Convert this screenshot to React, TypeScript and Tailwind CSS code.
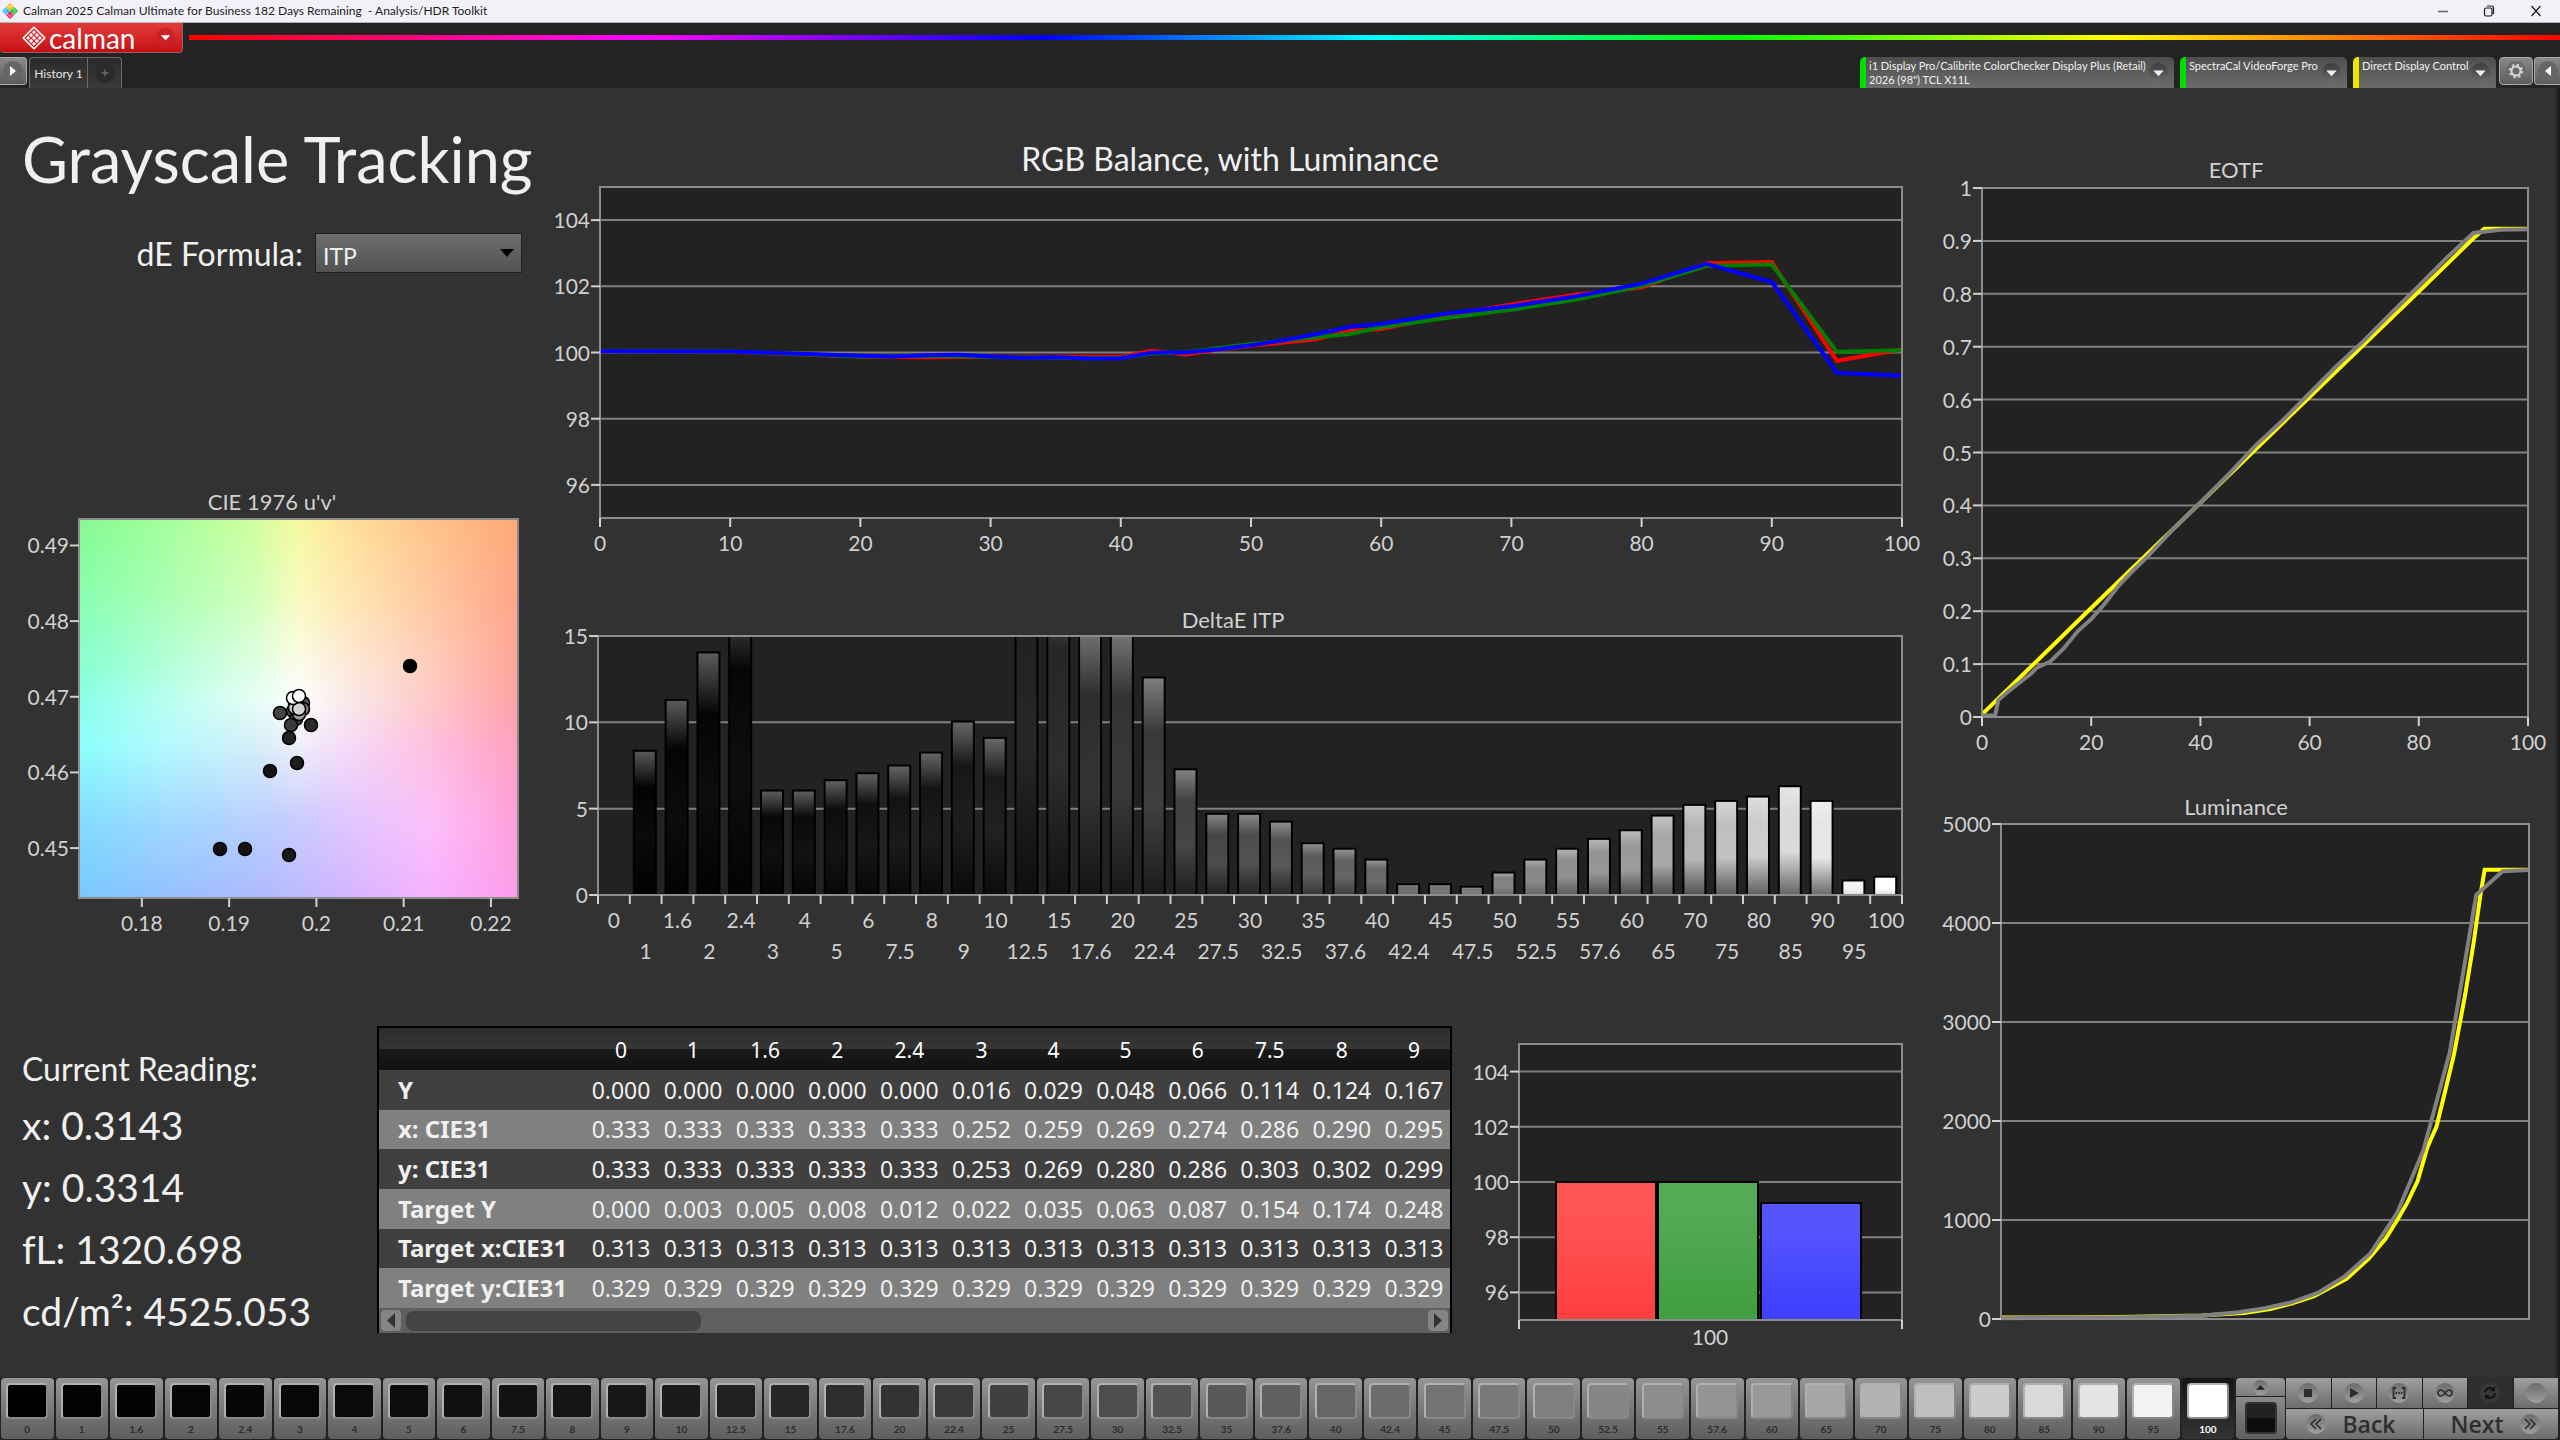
import type { ReactNode } from "react";
import clsx from "clsx";

type Point = [number, number];

type Plot = {
  left: number;
  right: number;
  top: number;
  bottom: number;
  xMin: number;
  xMax: number;
  yMin: number;
  yMax: number;
};

const LEVELS = [
  0, 1, 1.6, 2, 2.4, 3, 4, 5, 6, 7.5, 8, 9, 10, 12.5, 15, 17.6, 20, 22.4, 25, 27.5, 30, 32.5, 35,
  37.6, 40, 42.4, 45, 47.5, 50, 52.5, 55, 57.6, 60, 65, 70, 75, 80, 85, 90, 95, 100,
];

const DELTA_E = [
  0, 8.35, 11.3, 14.05, 17.5, 6.05, 6.05, 6.65, 7.05, 7.5, 8.25, 10.05, 9.1, 22, 19, 15.4, 15.4,
  12.6, 7.28, 4.7, 4.7, 4.25, 3, 2.68, 2.05, 0.62, 0.62, 0.48, 1.3, 2.05, 2.68, 3.25, 3.75, 4.6,
  5.22, 5.45, 5.7, 6.3, 5.45, 0.84, 1.06,
];

const RED: Point[] = [
  [0, 100.04], [10, 100.02], [20, 99.88], [25, 99.86], [30, 99.87], [37.6, 99.87], [40, 99.87],
  [42.4, 100.05], [45, 99.94], [47.5, 100.09], [50, 100.2], [55, 100.4], [57.6, 100.65],
  [60, 100.71], [65, 101.12], [70, 101.45], [75, 101.75], [80, 101.96], [85, 102.7],
  [90, 102.73], [95, 99.75], [100, 100.09],
];

const GREEN: Point[] = [
  [0, 100.04], [10, 100.03], [20, 99.88], [25, 99.9], [30, 99.87], [37.6, 99.83], [40, 99.84],
  [42.4, 99.97], [45, 100.01], [50, 100.26], [55, 100.46], [57.6, 100.56], [60, 100.76],
  [65, 101.04], [70, 101.29], [75, 101.6], [80, 102.01], [85, 102.62], [90, 102.66],
  [95, 100.02], [100, 100.07],
];

const BLUE: Point[] = [
  [0, 100.04], [10, 100.03], [20, 99.9], [22.4, 99.88], [25, 99.92], [27.5, 99.93], [30, 99.88],
  [32.5, 99.84], [35, 99.86], [37.6, 99.82], [40, 99.83], [42.4, 100], [45, 100], [47.5, 100.1],
  [50, 100.22], [52.5, 100.37], [55, 100.55], [57.6, 100.78], [60, 100.86], [65, 101.18],
  [70, 101.4], [75, 101.7], [80, 102.08], [85, 102.68], [90, 102.13], [95, 99.39], [100, 99.3],
];

const EOTF_TARGET: Point[] = [
  [0, 0.005], [20, 0.206], [40, 0.405], [60, 0.605], [80, 0.804], [90, 0.905], [92, 0.923],
  [100, 0.923],
];

const EOTF_MEASURED: Point[] = [
  [0, 0.003], [2.4, 0.003], [3, 0.032], [5, 0.05], [7.5, 0.07], [9, 0.082], [10, 0.093],
  [12.5, 0.105], [15, 0.13], [17.6, 0.163], [20, 0.185], [22.4, 0.213], [25, 0.248],
  [27.5, 0.275], [30, 0.3], [35, 0.355], [40, 0.405], [45, 0.457], [50, 0.512], [55, 0.56],
  [60, 0.612], [65, 0.664], [70, 0.712], [75, 0.764], [80, 0.815], [85, 0.867], [90, 0.915],
  [95, 0.921], [100, 0.922],
];

const LUM_TARGET: Point[] = [
  [0, 14], [20, 18], [38, 35], [46, 60], [51, 100], [55, 155], [59.3, 230], [65.5, 407],
  [69.7, 613], [72.8, 807], [75.2, 1012], [77, 1180], [78.9, 1394], [80.8, 1741], [82.5, 1947],
  [84.3, 2340], [85.8, 2675], [87.9, 3273], [89.5, 3797], [90.8, 4282], [91.6, 4537], [100, 4537],
];

const LUM_MEASURED: Point[] = [
  [0, 8], [20, 12], [38, 32], [45, 68], [50, 108], [55, 168], [60, 264], [65, 426], [70, 665],
  [75, 1069], [80, 1704], [85, 2694], [90, 4282], [95, 4522], [100, 4535],
];

// Colours of the u'v' plane, one row per height, at the columns in MESH_X
const MESH_X = [0, 0.2, 0.4, 0.5, 0.6, 0.8, 1];
const MESH: { y: number; colors: string[] }[] = [
  { y: 0, colors: ["86f98f", "a5ff9c", "d0ff9e", "f6f9a0", "ffe29a", "ffc38a", "ffa775"] },
  { y: 0.2, colors: ["88ffb0", "abffb4", "d2ffba", "f8fbbe", "ffe9b4", "ffc8a0", "ffa588"] },
  { y: 0.4, colors: ["88ffd4", "b4ffdc", "e0ffe6", "fbfcee", "fdebdc", "ffcdbf", "ffa59a"] },
  { y: 0.48, colors: ["8affea", "b8fff0", "e6fdf6", "ffffff", "f8ecec", "ffc8c8", "ffa2a6"] },
  { y: 0.6, colors: ["8afffb", "b4f9ff", "d4eef8", "eeeef8", "f6dcfa", "ffc0e0", "ffa0c0"] },
  { y: 0.8, colors: ["82dcff", "a0d8ff", "b8d0ff", "c8cbff", "dec6ff", "fcc0fb", "ff9edb"] },
  { y: 1, colors: ["78c8ff", "94c0ff", "acbaff", "bebaff", "d2b6ff", "f6b2ff", "ff9cea"] },
];

const CIE_POINTS: [number, number, string][] = [
  [303, 223, "#555"], [295, 225, "#666"], [293, 231, "#4c4c4c"], [303, 229, "#777"],
  [296, 239, "#444"], [299, 234, "#999"], [295, 228, "#ccc"], [299, 229, "#d4d4d4"],
  [410, 186, "#000"], [280, 233, "#444"], [311, 245, "#2a2a2a"], [291, 245, "#3a3a3a"],
  [289, 258, "#222"], [297, 283, "#1c1c1c"], [270, 291, "#141414"], [220, 369, "#101010"],
  [245, 369, "#131313"], [289, 375, "#181818"], [293, 218, "#fff"], [299, 216, "#fff"],
];

const TABLE_HEAD = ["0", "1", "1.6", "2", "2.4", "3", "4", "5", "6", "7.5", "8", "9"];
const TABLE_ROWS: { name: string; cells: string[] }[] = [
  {
    name: "Y",
    cells: ["0.000", "0.000", "0.000", "0.000", "0.000", "0.016", "0.029", "0.048", "0.066", "0.114", "0.124", "0.167"],
  },
  {
    name: "x: CIE31",
    cells: ["0.333", "0.333", "0.333", "0.333", "0.333", "0.252", "0.259", "0.269", "0.274", "0.286", "0.290", "0.295"],
  },
  {
    name: "y: CIE31",
    cells: ["0.333", "0.333", "0.333", "0.333", "0.333", "0.253", "0.269", "0.280", "0.286", "0.303", "0.302", "0.299"],
  },
  {
    name: "Target Y",
    cells: ["0.000", "0.003", "0.005", "0.008", "0.012", "0.022", "0.035", "0.063", "0.087", "0.154", "0.174", "0.248"],
  },
  { name: "Target x:CIE31", cells: Array(12).fill("0.313") },
  { name: "Target y:CIE31", cells: Array(12).fill("0.329") },
];

const range = (from: number, to: number, step: number) =>
  Array.from({ length: Math.round((to - from) / step) + 1 }, (_, i) => +(from + i * step).toFixed(2));

const sx = (p: Plot, v: number) => p.left + ((v - p.xMin) / (p.xMax - p.xMin)) * (p.right - p.left);
const sy = (p: Plot, v: number) => p.bottom - ((v - p.yMin) / (p.yMax - p.yMin)) * (p.bottom - p.top);

const gray = (v: number) => {
  const n = Math.max(0, Math.min(255, Math.round(v)));
  return `rgb(${n},${n},${n})`;
};

function mixRow(t: number) {
  const i = Math.max(1, MESH.findIndex((r) => r.y >= t));
  const a = MESH[i - 1];
  const b = MESH[i];
  const k = (t - a.y) / (b.y - a.y);
  return a.colors.map((c, n) => {
    const channel = (o: number) => {
      const from = parseInt(c.slice(o, o + 2), 16);
      const to = parseInt(b.colors[n].slice(o, o + 2), 16);
      return Math.round(from + (to - from) * k);
    };
    return `rgb(${channel(0)},${channel(2)},${channel(4)})`;
  });
}

/* ---------- chart parts ---------- */

function ChartTitle({ x, y, large, children }: { x: number; y: number; large?: boolean; children: string }) {
  return (
    <text x={x} y={y} textAnchor="middle" className={large ? "fill-[#f0f0f0] text-[32px]" : "fill-[#d0d0d0] text-[22px]"}>
      {children}
    </text>
  );
}

function YAxis({ plot, ticks }: { plot: Plot; ticks: number[] }) {
  return (
    <g>
      {ticks.map((t) => (
        <g key={t}>
          <line x1={plot.left - 9} x2={plot.left} y1={sy(plot, t)} y2={sy(plot, t)} stroke="#d0d0d0" strokeWidth="2" />
          <text x={plot.left - 10} y={sy(plot, t) + 8} textAnchor="end" className="fill-[#d0d0d0] text-[21px]">
            {t}
          </text>
        </g>
      ))}
    </g>
  );
}

function XAxis({ plot, ticks }: { plot: Plot; ticks: number[] }) {
  return (
    <g>
      {ticks.map((t) => (
        <g key={t}>
          <line x1={sx(plot, t)} x2={sx(plot, t)} y1={plot.bottom} y2={plot.bottom + 9} stroke="#d0d0d0" strokeWidth="2" />
          <text x={sx(plot, t)} y={plot.bottom + 33} textAnchor="middle" className="fill-[#d0d0d0] text-[21px]">
            {t}
          </text>
        </g>
      ))}
    </g>
  );
}

function PlotArea({ plot, grid, children }: { plot: Plot; grid: number[]; children?: ReactNode }) {
  const width = plot.right - plot.left;
  const height = plot.bottom - plot.top;
  return (
    <g>
      <rect x={plot.left} y={plot.top} width={width} height={height} fill="#222" />
      {grid.map((t) => (
        <line key={t} x1={plot.left} x2={plot.right} y1={sy(plot, t)} y2={sy(plot, t)} stroke="#808080" strokeWidth="2" />
      ))}
      {children}
      <rect x={plot.left} y={plot.top} width={width} height={height} fill="none" stroke="#8c8c8c" strokeWidth="2" />
    </g>
  );
}

function Series({ plot, data, color }: { plot: Plot; data: Point[]; color: string }) {
  return (
    <polyline
      points={data.map(([x, y]) => `${sx(plot, x)},${sy(plot, y)}`).join(" ")}
      fill="none"
      stroke={color}
      strokeWidth="4"
    />
  );
}

/* ---------- charts ---------- */

function RgbBalanceChart() {
  const plot: Plot = { left: 60, right: 1362, top: 57, bottom: 388, xMin: 0, xMax: 100, yMin: 95, yMax: 105 };
  const ticks = range(96, 104, 2);
  return (
    <svg viewBox="0 0 1380 440" className="block w-full" role="img" aria-label="RGB Balance">
      <ChartTitle x={690} y={41} large>RGB Balance, with Luminance</ChartTitle>
      <PlotArea plot={plot} grid={ticks}>
        <Series plot={plot} data={RED} color="#f00" />
        <Series plot={plot} data={GREEN} color="#008000" />
        <Series plot={plot} data={BLUE} color="#00f" />
      </PlotArea>
      <YAxis plot={plot} ticks={ticks} />
      <XAxis plot={plot} ticks={range(0, 100, 10)} />
    </svg>
  );
}

function DeltaEChart() {
  const plot: Plot = { left: 58, right: 1362, top: 36, bottom: 295, xMin: 0, xMax: 41, yMin: 0, yMax: 15 };
  return (
    <svg viewBox="0 0 1380 380" className="block w-full" role="img" aria-label="DeltaE ITP">
      <defs>
        <clipPath id="delta-clip">
          <rect x={plot.left} y={plot.top} width={plot.right - plot.left} height={plot.bottom - plot.top} />
        </clipPath>
        {LEVELS.map((level, i) => {
          const base = level * 2.55;
          const shade = 1 - Math.min(0.55, DELTA_E[i] * 0.14);
          return (
            <linearGradient key={level} id={`bar-${i}`} x1="0" x2="0" y1="0" y2="1">
              <stop offset="0" stopColor={gray(base + (255 - base) * 0.35)} />
              <stop offset="0.25" stopColor={gray(base)} />
              <stop offset="0.6" stopColor={gray(base * 0.97 + 8)} />
              <stop offset="1" stopColor={gray(base * shade)} />
            </linearGradient>
          );
        })}
      </defs>
      <ChartTitle x={693} y={28}>DeltaE ITP</ChartTitle>
      <PlotArea plot={plot} grid={[5, 10]}>
        <g clipPath="url(#delta-clip)">
          {DELTA_E.map((v, i) =>
            v > 0 ? (
              <rect
                key={i}
                x={sx(plot, i) + 4}
                y={sy(plot, v)}
                width={22}
                height={plot.bottom - sy(plot, v) + 1}
                fill={`url(#bar-${i})`}
                stroke="#000"
                strokeWidth="2"
              />
            ) : null
          )}
        </g>
      </PlotArea>
      <YAxis plot={plot} ticks={[0, 5, 10, 15]} />
      {range(0, 41, 1).map((i) => (
        <line key={i} x1={sx(plot, i)} x2={sx(plot, i)} y1={plot.bottom} y2={plot.bottom + 9} stroke="#d0d0d0" strokeWidth="2" />
      ))}
      {LEVELS.map((level, i) => (
        <text
          key={level}
          x={sx(plot, i + 0.5)}
          y={i % 2 ? plot.bottom + 64 : plot.bottom + 33}
          textAnchor="middle"
          className="fill-[#d0d0d0] text-[21px]"
        >
          {level}
        </text>
      ))}
    </svg>
  );
}

function CieChart() {
  const plot: Plot = { left: 79, right: 518, top: 39, bottom: 418, xMin: 0.1728, xMax: 0.2231, yMin: 0.4434, yMax: 0.4935 };
  const width = plot.right - plot.left;
  const strips = range(0, 94, 1);
  const stripHeight = (plot.bottom - plot.top) / strips.length;
  return (
    <svg viewBox="0 0 540 480" className="block w-full" role="img" aria-label="CIE 1976 u'v'">
      <defs>
        {strips.map((i) => (
          <linearGradient key={i} id={`uv-${i}`} x1="0" x2="1" y1="0" y2="0">
            {mixRow((i + 0.5) / strips.length).map((c, n) => (
              <stop key={n} offset={MESH_X[n]} stopColor={c} />
            ))}
          </linearGradient>
        ))}
      </defs>
      <ChartTitle x={272} y={30}>CIE 1976 u'v'</ChartTitle>
      {strips.map((i) => (
        <rect key={i} x={plot.left} y={plot.top + i * stripHeight} width={width} height={stripHeight + 1} fill={`url(#uv-${i})`} />
      ))}
      <rect x={plot.left} y={plot.top} width={width} height={plot.bottom - plot.top} fill="none" stroke="#8c8c8c" strokeWidth="2" />
      {CIE_POINTS.map(([x, y, fill], i) => (
        <circle key={i} cx={x} cy={y} r="6.5" fill={fill} stroke="#000" strokeWidth="1.5" />
      ))}
      <YAxis plot={plot} ticks={range(0.45, 0.49, 0.01)} />
      <XAxis plot={plot} ticks={range(0.18, 0.22, 0.01)} />
    </svg>
  );
}

function EotfChart() {
  const plot: Plot = { left: 62, right: 608, top: 38, bottom: 567, xMin: 0, xMax: 100, yMin: 0, yMax: 1 };
  return (
    <svg viewBox="0 0 640 620" className="block w-full" role="img" aria-label="EOTF">
      <ChartTitle x={316} y={28}>EOTF</ChartTitle>
      <PlotArea plot={plot} grid={range(0.1, 1, 0.1)}>
        <Series plot={plot} data={EOTF_TARGET} color="#ff0" />
        <Series plot={plot} data={EOTF_MEASURED} color="#808080" />
      </PlotArea>
      <YAxis plot={plot} ticks={range(0, 1, 0.1)} />
      <XAxis plot={plot} ticks={range(0, 100, 20)} />
    </svg>
  );
}

function LuminanceChart() {
  const plot: Plot = { left: 81, right: 609, top: 44, bottom: 539, xMin: 0, xMax: 100, yMin: 0, yMax: 5000 };
  return (
    <svg viewBox="0 0 640 580" className="block w-full" role="img" aria-label="Luminance">
      <ChartTitle x={316} y={35}>Luminance</ChartTitle>
      <PlotArea plot={plot} grid={range(1000, 4000, 1000)}>
        <Series plot={plot} data={LUM_TARGET} color="#ff0" />
        <Series plot={plot} data={LUM_MEASURED} color="#808080" />
      </PlotArea>
      <YAxis plot={plot} ticks={range(0, 5000, 1000)} />
    </svg>
  );
}

function RgbLevelsChart() {
  const plot: Plot = { left: 67, right: 450, top: 34, bottom: 310, xMin: 0, xMax: 1, yMin: 95, yMax: 105 };
  const ticks = range(96, 104, 2);
  const bars = [
    { id: "red", value: 100, x: 104, from: "#ff5555", to: "#ff4040" },
    { id: "green", value: 100, x: 206, from: "#55aa55", to: "#409f40" },
    { id: "blue", value: 99.24, x: 309, from: "#5555ff", to: "#4040ff" },
  ];
  return (
    <svg viewBox="0 0 468 350" className="block w-full" role="img" aria-label="RGB levels">
      <defs>
        {bars.map((b) => (
          <linearGradient key={b.id} id={`level-${b.id}`} x1="0" x2="0" y1="0" y2="1">
            <stop offset="0.2" stopColor={b.from} />
            <stop offset="0.9" stopColor={b.to} />
          </linearGradient>
        ))}
      </defs>
      <PlotArea plot={plot} grid={ticks}>
        {bars.map((b) => (
          <rect
            key={b.id}
            x={b.x}
            y={sy(plot, b.value)}
            width={100}
            height={plot.bottom - sy(plot, b.value)}
            fill={`url(#level-${b.id})`}
            stroke="#000"
            strokeWidth="2"
          />
        ))}
      </PlotArea>
      <YAxis plot={plot} ticks={ticks} />
      {[plot.left, plot.right].map((x) => (
        <line key={x} x1={x} x2={x} y1={plot.bottom} y2={plot.bottom + 9} stroke="#d0d0d0" strokeWidth="2" />
      ))}
      <text x={258} y={335} textAnchor="middle" className="fill-[#d0d0d0] text-[21px]">100</text>
    </svg>
  );
}

/* ---------- window chrome ---------- */

function Knob({ className, children }: { className?: string; children?: ReactNode }) {
  return (
    <span className={clsx("flex shrink-0 items-center justify-center rounded-full", className)}>
      <svg viewBox="0 0 20 20" className="h-full w-full" fill="currentColor" aria-hidden="true">
        {children}
      </svg>
    </span>
  );
}

function TitleBar() {
  return (
    <div className="flex h-[23px] items-center border-b border-[#b4b2b8] bg-[#f3f1f8] text-[12px] text-[#1c1c1c]">
      <svg viewBox="0 0 16 16" className="ml-[2px] h-4 w-4" aria-hidden="true">
        <path d="M8 0l4 4-4 4-4-4z" fill="#fcc419" />
        <path d="M12 4l4 4-4 4-4-4z" fill="#2fc52f" />
        <path d="M8 8l4 4-4 4-4-4z" fill="#f0245c" />
        <path d="M4 4l4 4-4 4-4-4z" fill="#2fc4f0" />
        <path d="M8 2.5L13.5 8 8 13.5 2.5 8z" fill="none" stroke="#f3f1f8" strokeWidth="0.7" />
      </svg>
      <h1 className="ml-[5px] grow whitespace-pre">
        Calman 2025 Calman Ultimate for Business 182 Days Remaining  - Analysis/HDR Toolkit
      </h1>
      <button aria-label="Minimize" className="flex h-full w-[46px] items-center justify-center">
        <svg viewBox="0 0 12 12" className="h-3 w-3"><path d="M1 6.5h10" stroke="#666" strokeWidth="1.5" /></svg>
      </button>
      <button aria-label="Restore" className="flex h-full w-[46px] items-center justify-center">
        <svg viewBox="0 0 12 12" className="h-3 w-3" fill="none" stroke="#1c1c1c" strokeWidth="1.2">
          <rect x="1.5" y="3" width="7.5" height="8" rx="1.5" />
          <path d="M4 1h4.5a2 2 0 0 1 2 2v6" />
        </svg>
      </button>
      <button aria-label="Close" className="flex h-full w-[48px] items-center justify-center">
        <svg viewBox="0 0 12 12" className="h-3 w-3"><path d="M1.5 1l9 10M10.5 1l-9 10" stroke="#1c1c1c" strokeWidth="1.2" /></svg>
      </button>
    </div>
  );
}

function BrandBar() {
  return (
    <div className="flex h-[34px] items-start">
      <button className="flex h-[30px] w-[183px] shrink-0 items-center rounded-b-[4px] border-r border-b border-[#8a6a6a] bg-linear-to-b from-[#e23a3a] to-[#c80a10] pl-[22px] text-white">
        <svg viewBox="0 0 24 24" className="h-6 w-6" aria-hidden="true">
          <path d="M12 1.5L22.5 12 12 22.5 1.5 12z" fill="#fff" stroke="#fff" strokeWidth="2" strokeLinejoin="round" />
          <path
            d="M12 3.2L20.8 12 12 20.8 3.2 12zM9.1 6.1L17.9 14.900M6.1 9.1L14.9 17.9M14.9 6.1L6.1 14.9M17.9 9.1L9.1 17.9"
            fill="none"
            stroke="#d8282c"
            strokeWidth="1.3"
          />
        </svg>
        <span className="ml-[3px] text-[28px] leading-[26px]">calman</span>
        <Knob className="ml-auto mr-[7px] h-[19px] w-[19px] bg-[#c92026]">
          <path d="M5 7.5h10L10 13z" />
        </Knob>
      </button>
      <div className="ml-[6px] mt-[12px] h-[5px] grow bg-[linear-gradient(to_right,#f00_0%,#f0f_19%,#00f_36%,#0ff_50%,#0f0_65%,#ff0_81%,#f00_100%)]" />
    </div>
  );
}

const DEVICES = [
  {
    lines: ["i1 Display Pro/Calibrite ColorChecker Display Plus (Retail)", "2026 (98\") TCL X11L"],
    status: "border-[#00e000]",
    width: "w-[314px]",
  },
  { lines: ["SpectraCal VideoForge Pro"], status: "border-[#00e000]", width: "w-[167px]" },
  { lines: ["Direct Display Control"], status: "border-[#f0e600]", width: "w-[143px]" },
];

function TabBar() {
  return (
    <div className="flex h-[31px] items-start">
      <button aria-label="Show workflow" className="flex h-[28px] w-[27px] items-center justify-center rounded-r-[4px] border border-l-0 border-[#a8a8a8] bg-linear-to-b from-[#8a8a8a] to-[#5c5c5c] text-white">
        <Knob className="h-[20px] w-[20px] bg-[#666]"><path d="M7 5l6 5-6 5z" /></Knob>
      </button>
      <div className="ml-[2px] flex h-[31px] rounded-t-[4px] border border-b-0 border-[#6a6a6a] bg-linear-to-b from-[#2c2c2c] to-[#3a3a3a]">
        <button className="w-[58px] border-r border-[#6a6a6a] pt-[2px] text-[12px] text-[#e6e6e6]">History 1</button>
        <button aria-label="Add history" className="flex w-[33px] items-center justify-center text-[#6c6c6c]">
          <Knob className="h-[20px] w-[20px] bg-[#2a2a2a]"><path d="M9.3 6.5h1.4v2.8h2.8v1.4h-2.8v2.8H9.3v-2.8H6.5V9.3h2.8z" /></Knob>
        </button>
      </div>
      <div className="ml-auto flex gap-[6px]">
        {DEVICES.map((d) => (
          <button
            key={d.lines[0]}
            className={clsx(
              "flex h-[31px] items-start rounded-t-[5px] border-l-[6px] bg-linear-to-b from-[#4e4e4e] to-[#6c6c6c] pt-[2px] pl-[3px] text-left text-[11px] leading-[14px] text-[#f0f0f0]",
              d.status,
              d.width
            )}
          >
            <span className="whitespace-nowrap">
              {d.lines.map((line) => <span key={line} className="block">{line}</span>)}
            </span>
            <Knob className="mt-[4px] ml-auto mr-[6px] h-[19px] w-[19px] bg-linear-to-b from-[#3c3c3c] to-[#6a6a6a]">
              <path d="M4.5 8h11L10 14z" />
            </Knob>
          </button>
        ))}
      </div>
      <div className="ml-[3px] flex gap-px">
        <button aria-label="Settings" className="flex h-[28px] w-[34px] items-center justify-center rounded-[4px] border border-[#a8a8a8] bg-linear-to-b from-[#8a8a8a] to-[#5c5c5c] text-[#d8d8d8]">
          <Knob className="h-[20px] w-[20px] bg-[#6a6a6a]">
            <circle cx="10" cy="10" r="4.5" fill="none" stroke="currentColor" strokeWidth="2" />
            <circle cx="10" cy="10" r="6.3" fill="none" stroke="currentColor" strokeWidth="1.8" strokeDasharray="2.47 2.47" />
          </Knob>
        </button>
        <button aria-label="Hide panel" className="flex h-[28px] w-[26px] items-center justify-center rounded-l-[4px] border border-r-0 border-[#a8a8a8] bg-linear-to-b from-[#8a8a8a] to-[#5c5c5c] text-white">
          <Knob className="h-[20px] w-[20px] bg-[#666]"><path d="M13 5l-6 5 6 5z" /></Knob>
        </button>
      </div>
    </div>
  );
}

/* ---------- readings ---------- */

function Readings() {
  return (
    <section className="pt-[38px] pl-[22px] text-[39px] leading-[62px] whitespace-nowrap text-[#f0f0f0]">
      <h3 className="mb-1 text-[32px] leading-[42px]">Current Reading:</h3>
      <p>x: 0.3143</p>
      <p>y: 0.3314</p>
      <p>fL: 1320.698</p>
      <p>cd/m²: 4525.053</p>
    </section>
  );
}

function DataTable() {
  return (
    <section className="mt-4 self-start border-x-2 border-t-2 border-black">
      <table className="h-[280px] w-full table-fixed border-collapse font-['Noto_Sans',sans-serif] text-[23px] leading-[30px] text-[#f0f0f0]">
        <thead>
          <tr className="h-[42px] bg-[linear-gradient(to_bottom,#2c2c2c_0%,#363636_50%,#1a1a1a_50%,#121212_100%)]">
            <th className="w-[206px]" aria-label="Measure" />
            {TABLE_HEAD.map((h) => (
              <th key={h} className="p-0 pt-[2px] text-[21px] font-normal text-white">{h}</th>
            ))}
          </tr>
        </thead>
        <tbody>
          {TABLE_ROWS.map((row) => (
            <tr key={row.name} className="bg-[#404040] even:bg-[#808080]">
              <th className="p-0 pl-[19px] text-left text-[24px] font-bold whitespace-nowrap">{row.name}</th>
              {row.cells.map((c, i) => <td key={i} className="p-0 text-center">{c}</td>)}
            </tr>
          ))}
        </tbody>
      </table>
      <div className="flex h-[25px] items-center gap-[5px] bg-[#5f5f5f] px-[2px]">
        <button aria-label="Scroll left" className="h-[21px] w-[20px] rounded-[4px] bg-[#858585] text-[#333]">
          <svg viewBox="0 0 20 21" fill="currentColor"><path d="M14 3v15L6 10.5z" /></svg>
        </button>
        <div className="grow">
          <div className="h-[20px] w-[29%] rounded-[8px] bg-[#444]" />
        </div>
        <button aria-label="Scroll right" className="h-[21px] w-[20px] rounded-[4px] bg-[#858585] text-[#333]">
          <svg viewBox="0 0 20 21" fill="currentColor"><path d="M6 3v15l8-7.5z" /></svg>
        </button>
      </div>
    </section>
  );
}

/* ---------- bottom bar ---------- */

const TRANSPORT: { name: string; active?: boolean; icon: ReactNode }[] = [
  { name: "Stop", icon: <path d="M6 6h8v8H6z" /> },
  { name: "Play", icon: <path d="M6 5l9 5-9 5z" /> },
  {
    name: "Read series",
    icon: (
      <path d="M7 5H4.5v10H7M13 5h2.5v10H13M6.5 10h1.6M9.2 10h1.6M11.9 10h1.6" fill="none" stroke="currentColor" strokeWidth="1.8" />
    ),
  },
  {
    name: "Read continuously",
    icon: (
      <path
        d="M10 10c-1.500-2-2.500-3-4-3a3 3 0 0 0 0 6c1.500 0 2.500-1 4-3s2.500-3 4-3a3 3 0 0 1 0 6c-1.500 0-2.500-1-4-3z"
        fill="none"
        stroke="currentColor"
        strokeWidth="1.6"
      />
    ),
  },
  {
    name: "Refresh",
    active: true,
    icon: (
      <g fill="none" stroke="currentColor" strokeWidth="2">
        <path d="M5 9.5a5 5 0 0 1 8.500-3M15 10.5a5 5 0 0 1-8.500 3" />
        <path d="M15 3v5h-5zM5 17v-5h5z" fill="currentColor" stroke="none" />
      </g>
    ),
  },
  { name: "Record", icon: null },
];

const KNOB = "bg-linear-to-b from-[#6c6c6c] to-[#a0a0a0]";

function LevelBar() {
  return (
    <footer className="flex h-[62px] gap-px bg-[#222] pb-px">
      <div className="flex grow gap-[2px] px-px">
        {LEVELS.map((level) => {
          const selected = level === 100;
          return (
            <button
              key={level}
              className={clsx(
                "flex min-w-0 flex-1 flex-col items-center rounded-[4px] pt-[5px] text-[10px] leading-[20px] font-bold",
                selected
                  ? "bg-linear-to-b from-[#161616] to-[#343434] text-white"
                  : "bg-linear-to-b from-[#969696] to-[#5e5e5e] text-[#2c2c2c]"
              )}
            >
              <span
                className="block h-[36px] w-[42px] rounded-[4px] border-2 border-[#b0b0b0] border-r-[#888] border-b-[#888]"
                style={{ backgroundColor: gray(level * 2.55) }}
              />
              {level}
            </button>
          );
        })}
      </div>
      <div className="flex w-[49px] flex-col gap-px">
        <button aria-label="Expand" className="flex h-[18px] items-center justify-center rounded-t-[4px] bg-linear-to-b from-[#9c9c9c] to-[#7c7c7c] text-[#222]">
          <Knob className={clsx("h-[15px] w-[15px]", KNOB)}><path d="M4 13h12l-6-6z" /></Knob>
        </button>
        <button aria-label="Current pattern" className="flex grow items-center justify-center rounded-b-[4px] bg-linear-to-b from-[#8a8a8a] to-[#5e5e5e]">
          <span className="block h-[32px] w-[32px] rounded-[4px] border-2 border-[#333] bg-[linear-gradient(to_bottom,#222_50%,#0c0c0c_50%)]" />
        </button>
      </div>
      <div className="mr-[2px] flex w-[272px] flex-col gap-px text-[#2e2e2e]">
        <div className="flex h-[30px] gap-px">
          {TRANSPORT.map((t) => (
            <button
              key={t.name}
              aria-label={t.name}
              className={clsx(
                "flex flex-1 items-center justify-center",
                t.active ? "bg-[#2e2e2e] text-[#111]" : "bg-linear-to-b from-[#a0a0a0] to-[#6c6c6c]"
              )}
            >
              <Knob className={clsx("h-[20px] w-[20px]", t.active ? "bg-[#383838]" : KNOB)}>{t.icon}</Knob>
            </button>
          ))}
        </div>
        <div className="flex grow gap-px font-['Open_Sans',sans-serif] text-[23px] leading-[26px] font-semibold">
          <button className="flex flex-1 items-center justify-between rounded-bl-[4px] bg-linear-to-b from-[#a0a0a0] to-[#6c6c6c] pr-[27px] pl-[20px]">
            <Knob className={clsx("h-[20px] w-[20px]", KNOB)}>
              <path d="M10 5l-5 5 5 5M15 5l-5 5 5 5" fill="none" stroke="currentColor" strokeWidth="1.6" />
            </Knob>
            Back
          </button>
          <button className="flex flex-1 items-center justify-between rounded-br-[4px] bg-linear-to-b from-[#a0a0a0] to-[#6c6c6c] pr-[18px] pl-[27px]">
            Next
            <Knob className={clsx("h-[20px] w-[20px]", KNOB)}>
              <path d="M5 5l5 5-5 5M10 5l5 5-5 5" fill="none" stroke="currentColor" strokeWidth="1.6" />
            </Knob>
          </button>
        </div>
      </div>
    </footer>
  );
}

export default function App() {
  return (
    <div className="flex min-h-screen flex-col bg-[#232323] font-[Lato,'Open_Sans',sans-serif]">
      <TitleBar />
      <BrandBar />
      <TabBar />

      <main className="grid grow grid-cols-[minmax(0,3fr)_minmax(0,1fr)] content-start bg-[#323232] shadow-[inset_-4px_0_3px_-1px_#1c1c1c]">
        <div>
          <div className="grid grid-cols-[minmax(0,540fr)_minmax(0,1380fr)]">
            <div className="pt-[34px]">
              <h2 className="pl-[22px] text-[63px] leading-[74px] whitespace-nowrap text-[#f0f0f0]">Grayscale Tracking</h2>
              <div className="mt-[37px] mr-[18px] flex items-center justify-end gap-[12px]">
                <label htmlFor="formula" className="text-[32px] leading-[37px] text-[#f0f0f0]">dE Formula:</label>
                <div className="relative w-[207px]">
                  <select
                    id="formula"
                    className="block h-[40px] w-full appearance-none border border-[#1e1e1e] bg-linear-to-b from-[#6e6e6e] to-[#525252] pt-[5px] pl-[7px] text-[23px] leading-[30px] text-[#f0f0f0]"
                  >
                    <option>ITP</option>
                  </select>
                  <svg viewBox="0 0 14 8" className="pointer-events-none absolute top-[16px] right-[8px] h-[8px] w-[14px]">
                    <path d="M0 0h14L7 8z" fill="#000" />
                  </svg>
                </div>
              </div>
              <div className="mt-[207px]">
                <CieChart />
              </div>
            </div>
            <div className="flex flex-col gap-[30px] pt-[42px]">
              <RgbBalanceChart />
              <DeltaEChart />
            </div>
          </div>
          <div className="mt-[30px] grid grid-cols-[minmax(0,377fr)_minmax(0,1075fr)_minmax(0,468fr)]">
            <Readings />
            <DataTable />
            <RgbLevelsChart />
          </div>
        </div>
        <div className="flex flex-col gap-[10px] pt-[62px]">
          <EotfChart />
          <LuminanceChart />
        </div>
      </main>

      <LevelBar />
    </div>
  );
}
